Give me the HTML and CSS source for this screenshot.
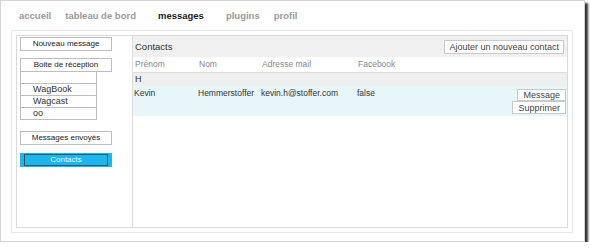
FILE: index.html
```html
<!DOCTYPE html>
<html lang="fr">
    <head>
        <meta charset="utf-8">
        <title>Messages - Contacts</title>
        <link rel="stylesheet" href="styles.css">
    </head>
    <body>
        <div class="frame">
            <ul class="nav">
                <li class="nav-item">accueil</li>
                <li class="nav-item">tableau de bord</li>
                <li class="nav-item current">messages</li>
                <li class="nav-item">plugins</li>
                <li class="nav-item">profil</li>
            </ul>

            <div class="panel">
                <div class="inner">
                    <div class="side">
                        <div class="sidebtn first">Nouveau message</div>
                        <div class="sidebtn">Boite de réception</div>
                        <ul class="folders">
                            <li></li>
                            <li>WagBook</li>
                            <li>Wagcast</li>
                            <li>oo</li>
                        </ul>
                        <div class="sidebtn sent">Messages envoyés</div>
                        <div class="sidebtn active">Contacts</div>
                    </div>

                    <div class="main">
                        <div class="head">
                            <span class="title">Contacts</span>
                            <button class="smallbtn">Ajouter un nouveau contact</button>
                        </div>
                        <div class="row cols">
                            <span>Prénom</span>
                            <span>Nom</span>
                            <span>Adresse mail</span>
                            <span>Facebook</span>
                        </div>
                        <div class="group">H</div>
                        <div class="row contact">
                            <span>Kevin</span>
                            <span>Hemmerstoffer</span>
                            <span>kevin.h@stoffer.com</span>
                            <span>false</span>
                            <div class="actions">
                                <button class="smallbtn">Message</button>
                                <button class="smallbtn">Supprimer</button>
                            </div>
                        </div>
                    </div>
                </div>
            </div>
        </div>
    </body>
</html>
```

FILE: styles.css
```css
body {
    margin: 0;
    background-color: #fff;
    font-family: "Liberation Sans", Arial, sans-serif;
}

.frame {
    box-sizing: border-box;
    width: 585px;
    height: 242px;
    border: 1px solid #d4d4d4;
    background-color: #fff;
    box-shadow: 3px 3px 2px #333;
}

/* top menu */
.nav {
    box-sizing: border-box;
    height: 29px;
    margin: 0;
    padding: 9px 0 0 18px;
    list-style: none;
    display: flex;
}

.nav-item {
    font-size: 9.5px;
    font-weight: bold;
    line-height: 11px;
    color: #9a9a9a;
    margin-right: 14px;
}

.nav-item.current {
    color: #222;
    margin: 0 22px 0 8px;
}

/* main box */
.panel {
    width: 562px;
    height: 203px;
    box-sizing: border-box;
    margin-left: 10px;
    border: 1px solid #e8e8e8;
    padding: 4px;
}

.inner {
    height: 100%;
    box-sizing: border-box;
    border: 1px solid #d9d9d9;
    display: flex;
}

/* left column */
.side {
    box-sizing: border-box;
    width: 116px;
    flex: none;
    border-right: 1px solid #dcdcdc;
    padding: 1px 0 0 3px;
}

.sidebtn {
    box-sizing: border-box;
    width: 92px;
    height: 14px;
    border: 1px solid #bdbdbd;
    background-color: #fff;
    font-size: 8px;
    line-height: 12px;
    text-align: center;
    color: #222;
}

.sidebtn.first {
    margin-bottom: 7px;
}

.sidebtn.sent {
    margin: 11px 0 8px;
}

.sidebtn.active {
    background-color: #1cb6ee;
    border-color: #1cb6ee;
    color: #e4f8ff;
    box-shadow: inset 3px 0 0 #1cb6ee, inset -3px 0 0 #1cb6ee, inset 4px 0 0 #234a63, inset -4px 0 0 #234a63, inset 0 1px 0 #2a5c7a, inset 0 -1px 0 #2a5c7a;
}

.folders {
    margin: -1px 0 0;
    padding: 0;
    list-style: none;
}

.folders li {
    box-sizing: border-box;
    width: 77px;
    height: 13px;
    margin-top: -1px;
    border: 1px solid #bdbdbd;
    padding-left: 12px;
    font-size: 9px;
    line-height: 11px;
    color: #333;
}

.folders li:first-child {
    margin-top: 0;
}

/* contact list */
.main {
    flex: 1;
}

.head {
    height: 21px;
    background-color: #f0f0f0;
    display: flex;
    align-items: center;
    justify-content: space-between;
    padding: 0 3px 0 2px;
}

.title {
    font-size: 9.5px;
    color: #333;
}

.smallbtn {
    box-sizing: border-box;
    height: 14px;
    margin: 0;
    padding: 0 4px;
    border: 1px solid #c9c9c9;
    background-color: #fff;
    font-family: "Liberation Sans", Arial, sans-serif;
    font-size: 9px;
    line-height: 12px;
    color: #444;
}

.row {
    display: grid;
    grid-template-columns: 64px 63px 96px 1fr auto;
    padding-left: 2px;
    font-size: 8.5px;
}

.cols {
    height: 15px;
    line-height: 15px;
    color: #888;
}

.group {
    height: 14px;
    box-sizing: border-box;
    border-top: 1px solid #dedede;
    background-color: #efefef;
    padding-left: 2px;
    font-size: 9px;
    line-height: 13px;
    color: #333;
}

.contact {
    height: 30px;
    box-sizing: border-box;
    padding: 2px 1px 0 1px;
    background-color: #e7f6f9;
    color: #333;
    line-height: 11px;
}

.actions {
    display: flex;
    flex-direction: column;
    align-items: flex-end;
    padding-top: 1px;
}

.actions .smallbtn {
    height: 12px;
    line-height: 10px;
    font-size: 9px;
    padding: 0 5px;
}

.actions .smallbtn + .smallbtn {
    height: 13px;
}
```
